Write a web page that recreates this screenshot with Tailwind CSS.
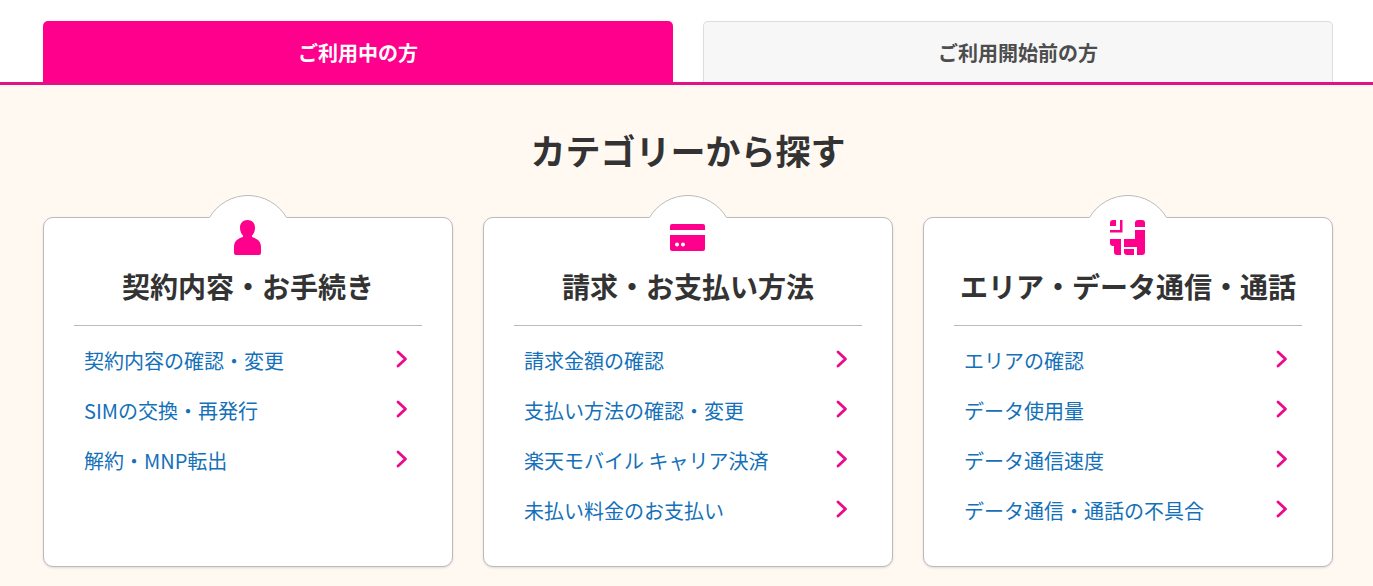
<!DOCTYPE html>
<html lang="ja">
<head>
<meta charset="utf-8">
<meta name="viewport" content="width=device-width, initial-scale=1">
<title>カテゴリーから探す</title>
<script src="https://cdn.jsdelivr.net/npm/@tailwindcss/browser@4"></script>
</head>
<body class="min-h-screen bg-[#fff9f2] font-['Noto_Sans_CJK_JP',sans-serif] text-[#333]">
<svg class="hidden">
  <symbol id="chevron" viewBox="0 0 12 18"><path d="M2 2 9.5 9 2 16" fill="none" stroke="#eb0a8c" stroke-width="2.8" stroke-linecap="round" stroke-linejoin="round"/></symbol>
  <symbol id="dome" viewBox="0 0 80 25"><path d="M1.500 22.500A44.700 44.700 0 0 1 78.500 22.500V25H1.500Z" fill="#fff"/><path d="M1.500 22.500A44.700 44.700 0 0 1 78.500 22.500" fill="none" stroke="#bbb"/></symbol>
</svg>
<div role="tablist" class="grid grid-cols-2 gap-[30px] border-b-3 border-[#e4108a] bg-white pt-[21px] pr-10 pl-[43px]">
  <button role="tab" aria-selected="true" class="h-[61px] rounded-t-[5px] bg-[#ff008c] pt-0.5 text-xl font-bold text-white">ご利用中の方</button>
  <button role="tab" aria-selected="false" class="h-[61px] rounded-t-[5px] border border-b-0 border-[#ddd] bg-[#f7f7f7] pt-0.5 text-xl font-bold text-[#4d4d4d]">ご利用開始前の方</button>
</div>
<main class="pt-[39px] pr-10 pb-5 pl-[43px]">
  <h1 class="text-center text-[35px] leading-[52px] font-bold">カテゴリーから探す</h1>
  <div class="mt-[41px] grid grid-cols-3 gap-[30px]">
    <section class="relative rounded-[10px] border border-[#bbb] bg-white px-[30px] pb-[30px] shadow-sm">
      <svg class="absolute -top-[23px] left-1/2 h-[25px] w-20 -translate-x-1/2" aria-hidden="true"><use href="#dome"/></svg>
      <svg class="relative mx-auto mt-[2px] h-[35px] w-9" viewBox="0 0 35 35" preserveAspectRatio="xMinYMin" fill="#ff008c" aria-hidden="true"><path d="M17.500 0C13 0 10 3 10 7.500C10 11 11 13.500 13 15.500V17C8 18.500 4 21 4 27V33Q4 35 6 35H29Q31 35 31 33V27C31 21 27 18.500 22 17V15.500C24 13.500 25 11 25 7.500C25 3 22 0 17.500 0Z"/></svg>
      <h2 class="border-b border-[#bbb] pt-[11px] pb-[19px] text-center text-[28px] leading-10 font-bold">契約内容・お手続き</h2>
      <ul class="pt-[10px] text-xl text-[#1470b8]">
        <li><a href="#" class="flex h-[50px] items-center justify-between px-[10px]">契約内容の確認・変更<svg class="mr-1 mb-1 h-[18px] w-3" aria-hidden="true"><use href="#chevron"/></svg></a></li>
        <li><a href="#" class="flex h-[50px] items-center justify-between px-[10px]">SIMの交換・再発行<svg class="mr-1 mb-1 h-[18px] w-3" aria-hidden="true"><use href="#chevron"/></svg></a></li>
        <li><a href="#" class="flex h-[50px] items-center justify-between px-[10px]">解約・MNP転出<svg class="mr-1 mb-1 h-[18px] w-3" aria-hidden="true"><use href="#chevron"/></svg></a></li>
      </ul>
    </section>
    <section class="relative rounded-[10px] border border-[#bbb] bg-white px-[30px] pb-[30px] shadow-sm">
      <svg class="absolute -top-[23px] left-1/2 h-[25px] w-20 -translate-x-1/2" aria-hidden="true"><use href="#dome"/></svg>
      <svg class="relative mx-auto mt-[2px] h-[35px] w-9" viewBox="0 0 35 35" preserveAspectRatio="xMinYMin" fill="#ff008c" aria-hidden="true"><path d="M0 10V6Q0 4 2 4H33Q35 4 35 6V10Z"/><path fill-rule="evenodd" d="M0 15H35V29Q35 31 33 31H2Q0 31 0 29ZM7 22.500A2 2 0 1 0 7 26.500A2 2 0 1 0 7 22.500ZM13 22.500A2 2 0 1 0 13 26.500A2 2 0 1 0 13 22.500Z"/></svg>
      <h2 class="border-b border-[#bbb] pt-[11px] pb-[19px] text-center text-[28px] leading-10 font-bold">請求・お支払い方法</h2>
      <ul class="pt-[10px] text-xl text-[#1470b8]">
        <li><a href="#" class="flex h-[50px] items-center justify-between px-[10px]">請求金額の確認<svg class="mr-1 mb-1 h-[18px] w-3" aria-hidden="true"><use href="#chevron"/></svg></a></li>
        <li><a href="#" class="flex h-[50px] items-center justify-between px-[10px]">支払い方法の確認・変更<svg class="mr-1 mb-1 h-[18px] w-3" aria-hidden="true"><use href="#chevron"/></svg></a></li>
        <li><a href="#" class="flex h-[50px] items-center justify-between px-[10px]">楽天モバイル キャリア決済<svg class="mr-1 mb-1 h-[18px] w-3" aria-hidden="true"><use href="#chevron"/></svg></a></li>
        <li><a href="#" class="flex h-[50px] items-center justify-between px-[10px]">未払い料金のお支払い<svg class="mr-1 mb-1 h-[18px] w-3" aria-hidden="true"><use href="#chevron"/></svg></a></li>
      </ul>
    </section>
    <section class="relative rounded-[10px] border border-[#bbb] bg-white px-[30px] pb-[30px] shadow-sm">
      <svg class="absolute -top-[23px] left-1/2 h-[25px] w-20 -translate-x-1/2" aria-hidden="true"><use href="#dome"/></svg>
      <svg class="relative mx-auto mt-[2px] h-[35px] w-9" viewBox="0 0 35 35" preserveAspectRatio="xMinYMin" fill="#ff008c" aria-hidden="true"><path d="M0 6V3Q0 0 3 0H6V6ZM10 0H12.500V12.500H0V10H10ZM25 7V3Q25 0 28 0H32Q35 0 35 3V7ZM25 10H35V32Q35 35 32 35H27V27H14V19H25ZM0 19H11V35H7Q4 35 4 32V26H3Q0 26 0 23ZM14 29H24V35H17Q14 35 14 32Z"/></svg>
      <h2 class="border-b border-[#bbb] pt-[11px] pb-[19px] text-center text-[28px] leading-10 font-bold whitespace-nowrap">エリア・データ通信・通話</h2>
      <ul class="pt-[10px] text-xl text-[#1470b8]">
        <li><a href="#" class="flex h-[50px] items-center justify-between px-[10px]">エリアの確認<svg class="mr-1 mb-1 h-[18px] w-3" aria-hidden="true"><use href="#chevron"/></svg></a></li>
        <li><a href="#" class="flex h-[50px] items-center justify-between px-[10px]">データ使用量<svg class="mr-1 mb-1 h-[18px] w-3" aria-hidden="true"><use href="#chevron"/></svg></a></li>
        <li><a href="#" class="flex h-[50px] items-center justify-between px-[10px]">データ通信速度<svg class="mr-1 mb-1 h-[18px] w-3" aria-hidden="true"><use href="#chevron"/></svg></a></li>
        <li><a href="#" class="flex h-[50px] items-center justify-between px-[10px]">データ通信・通話の不具合<svg class="mr-1 mb-1 h-[18px] w-3" aria-hidden="true"><use href="#chevron"/></svg></a></li>
      </ul>
    </section>
  </div>
</main>
</body>
</html>
